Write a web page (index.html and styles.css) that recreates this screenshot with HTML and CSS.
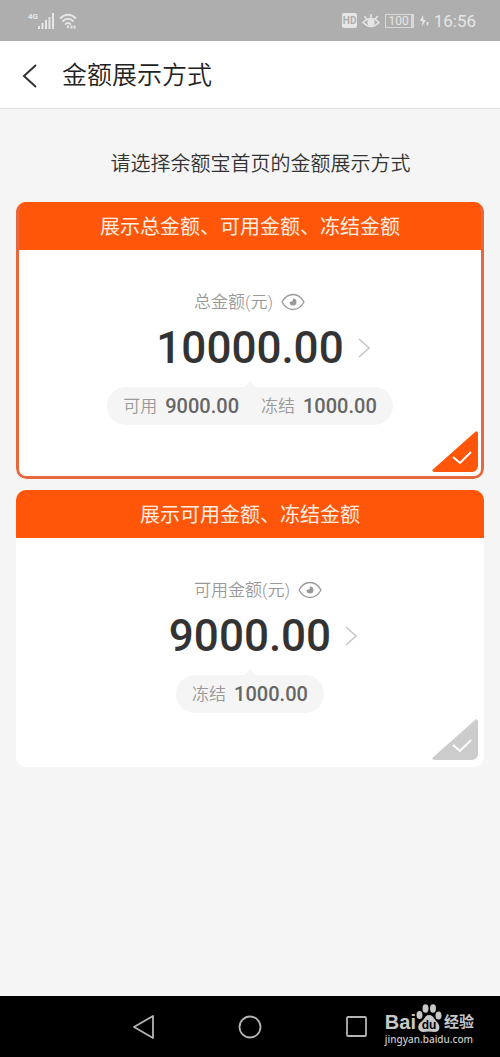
FILE: index.html
```html
<!DOCTYPE html>
<html lang="zh-CN">
<head>
<meta charset="utf-8">
<meta name="viewport" content="width=device-width, initial-scale=1">
<title>金额展示方式</title>
<link rel="stylesheet" href="styles.css">
</head>
<body>
<div class="status">
  <div class="status-group">
    <span class="network">4G</span>
    <svg class="signal" width="17" height="16" viewBox="0 0 17 16" fill="currentColor"><path d="M0 13h2v3H0zM3.500 10h2v6h-2zM7 7h2v9H7zM10.500 4h2v12h-2zM14 0h2v16h-2z"/></svg>
    <svg width="20" height="16" viewBox="0 0 20 16" fill="none" stroke="currentColor" stroke-width="1.800"><path d="M1 5.500Q9 -2 17 5.500M3.500 8.500Q9 3 14.500 8.500M6 11.500Q9 8.500 12 11.500"/><path d="M9 12.500v2.500M12.500 12.500v3M15.500 12.500v3" stroke-width="2"/></svg>
  </div>
  <div class="status-group status-right">
    <span class="hd">HD</span>
    <svg width="18" height="16" viewBox="0 0 18 16" fill="none" stroke="currentColor" stroke-width="1.600"><path d="M1 9.500Q9 1.500 17 9.500Q9 17.500 1 9.500zM9 4.500V1M4.500 6L2.500 3M13.500 6l2-3"/><circle cx="9" cy="9.500" r="2.800" fill="currentColor"/></svg>
    <span class="battery">100</span>
    <svg class="bolt" width="10" height="12" viewBox="0 0 10 12" fill="currentColor"><path d="M4 0L1 6h2.500L3 11l4-6H4.500zM7.500 7h2v2l-1.500 2z"/></svg>
    <span class="clock">16:56</span>
  </div>
</div>

<header class="header">
  <button class="back" type="button" aria-label="返回">
    <svg width="16" height="26" viewBox="0 0 16 26" fill="none" stroke="currentColor" stroke-width="2"><path d="M14 2L2 13l12 11"/></svg>
  </button>
  <h1 class="title">金额展示方式</h1>
</header>

<main class="main">
  <h2 class="prompt">请选择余额宝首页的金额展示方式</h2>

  <label class="card">
    <span class="card-head">展示总金额、可用金额、冻结金额</span>
    <span class="card-body">
      <span class="caption">总金额(元)
        <svg class="eye" width="24" height="18" viewBox="0 0 24 18" fill="none" stroke="currentColor" stroke-width="1.300"><path d="M1 9C6.500-1 17.500-1 23 9C17.500 19 6.500 19 1 9z"/><path d="M12 5.500a3.500 3.500 0 1 1-3.500 3.500q3.500 0 3.500-3.500z" fill="currentColor" stroke="none"/></svg>
      </span>
      <span class="amount-row">
        <span class="amount">10000.00</span>
        <svg class="arrow" width="12" height="20" viewBox="0 0 12 20" fill="none" stroke="currentColor" stroke-width="1.600"><path d="M1 1l10 9-10 9"/></svg>
      </span>
      <span class="pill">
        <span class="pair">可用 <b class="value">9000.00</b></span>
        <span class="pair">冻结 <b class="value">1000.00</b></span>
      </span>
    </span>
    <input class="choice" type="radio" name="display" checked>
    <svg class="tick" width="20" height="14" viewBox="0 0 20 14" fill="none" stroke="currentColor" stroke-width="2"><path d="M1 6l7 6L19 1"/></svg>
  </label>

  <label class="card">
    <span class="card-head">展示可用金额、冻结金额</span>
    <span class="card-body">
      <span class="caption">可用金额(元)
        <svg class="eye" width="24" height="18" viewBox="0 0 24 18" fill="none" stroke="currentColor" stroke-width="1.300"><path d="M1 9C6.500-1 17.500-1 23 9C17.500 19 6.500 19 1 9z"/><path d="M12 5.500a3.500 3.500 0 1 1-3.500 3.500q3.500 0 3.500-3.500z" fill="currentColor" stroke="none"/></svg>
      </span>
      <span class="amount-row">
        <span class="amount">9000.00</span>
        <svg class="arrow" width="12" height="20" viewBox="0 0 12 20" fill="none" stroke="currentColor" stroke-width="1.600"><path d="M1 1l10 9-10 9"/></svg>
      </span>
      <span class="pill">
        <span class="pair">冻结 <b class="value">1000.00</b></span>
      </span>
    </span>
    <input class="choice" type="radio" name="display">
    <svg class="tick" width="20" height="14" viewBox="0 0 20 14" fill="none" stroke="currentColor" stroke-width="2"><path d="M1 6l7 6L19 1"/></svg>
  </label>
</main>

<nav class="nav">
  <button class="nav-button" type="button" aria-label="返回上一页"><svg width="24" height="24" viewBox="0 0 24 24" fill="none" stroke="currentColor" stroke-width="1.800" stroke-linejoin="round"><path d="M21 1v22L2 12z"/></svg></button>
  <button class="nav-button" type="button" aria-label="主屏幕"><svg width="24" height="24" viewBox="0 0 24 24" fill="none" stroke="currentColor" stroke-width="1.800"><circle cx="12" cy="12" r="10.500"/></svg></button>
  <button class="nav-button" type="button" aria-label="最近任务"><svg width="24" height="24" viewBox="0 0 24 24" fill="none" stroke="currentColor" stroke-width="1.800"><rect x="3" y="2" width="19" height="19" rx="1"/></svg></button>
  <div class="brand">
    <div class="brand-name">
      <span>Bai</span>
      <span class="paw">
        <svg width="26" height="28" viewBox="0 0 26 28" fill="currentColor"><ellipse cx="3.500" cy="11" rx="3" ry="4"/><ellipse cx="9.500" cy="4.500" rx="3" ry="4.200"/><ellipse cx="17" cy="4.500" rx="3" ry="4.200"/><ellipse cx="22.500" cy="11.500" rx="3" ry="4"/><path d="M13 11c4 0 5 4 8 7s4 9-2 10q-6-1-12 0c-6-1-6-7-2-10s4-7 8-7z"/></svg>
        <span class="paw-text">du</span>
      </span>
      <span class="brand-cn">经验</span>
    </div>
    <div class="brand-url">jingyan.baidu.com</div>
  </div>
</nav>
</body>
</html>
```
FILE: styles.css
```css
* {
  box-sizing: border-box;
}

body {
  margin: 0;
  min-height: 100vh;
  display: flex;
  flex-direction: column;
  background: #f5f5f5;
  color: #333;
  font-family: Roboto, "Noto Sans CJK SC", sans-serif;
}

button {
  padding: 0;
  border: 0;
  background: none;
  color: inherit;
}

svg {
  display: block;
  flex: none;
}

.status {
  height: 41px;
  padding: 0 24px 0 28px;
  display: flex;
  align-items: center;
  justify-content: space-between;
  background: #aeaeae;
  color: #e6e6e6;
}

.status-group {
  display: flex;
  align-items: center;
}

.network {
  align-self: flex-start;
  font-size: 8px;
  font-weight: 700;
  line-height: 8px;
}

.signal {
  margin-right: 4px;
}

.status-right {
  gap: 5px;
}

.hd {
  padding: 0 1px;
  border-radius: 2px;
  background: #e6e6e6;
  color: #aeaeae;
  font-size: 10px;
  font-weight: 700;
  line-height: 15px;
}

.battery {
  padding: 0 2px;
  border: 1px solid #d8d8d8;
  border-right-width: 3px;
  font-size: 12px;
  line-height: 12px;
}

.clock {
  font-size: 17px;
  line-height: 20px;
}

.header {
  height: 68px;
  padding: 2px 22px 0;
  display: flex;
  align-items: center;
  gap: 24px;
  border-bottom: 1px solid #dedede;
  background: #fff;
}

.title {
  margin: 0;
  font-size: 25px;
  font-weight: 350;
  line-height: 36px;
  color: #222;
}

.main {
  flex: 1;
  padding: 40px 16px 24px;
  display: flex;
  flex-direction: column;
}

.prompt {
  margin: 0 0 23px;
  padding-left: 21px;
  font-size: 20px;
  font-weight: 350;
  line-height: 30px;
  text-align: center;
}

.card {
  position: relative;
  display: block;
  margin-bottom: 11px;
  padding-bottom: 54px;
  border-radius: 10px;
  background: #fff;
  overflow: hidden;
}

.card:has(:checked)::after {
  content: "";
  position: absolute;
  inset: 0;
  border: 3px solid #e8683e;
  border-top-color: #ff560a;
  border-radius: 10px;
  pointer-events: none;
}

.card-head {
  display: block;
  padding-top: 2px;
  background: #ff560a;
  color: #ffeee0;
  font-size: 20px;
  line-height: 46px;
  text-align: center;
}

.card-body {
  padding-top: 39px;
  display: flex;
  flex-direction: column;
  align-items: center;
}

.caption {
  width: 112px;
  display: flex;
  align-items: center;
  gap: 8px;
  color: #999;
  font-size: 17px;
  font-weight: 350;
  line-height: 26px;
  white-space: nowrap;
}

.amount-row {
  width: 100%;
  margin-bottom: 6px;
  display: grid;
  grid-template-columns: 1fr auto 1fr;
  align-items: center;
  column-gap: 14px;
}

.amount {
  grid-column: 2;
  font-size: 44px;
  font-weight: 500;
  line-height: 66px;
}

.arrow {
  color: #c8c8c8;
}

.pill {
  position: relative;
  padding: 0 16px;
  display: flex;
  gap: 22px;
  border-radius: 19px;
  background: #f5f5f5;
  color: #999;
  font-size: 17px;
  font-weight: 350;
  line-height: 38px;
}

.pill::before {
  content: "";
  position: absolute;
  left: 50%;
  bottom: 100%;
  margin-left: -6px;
  border: 6px solid transparent;
  border-top: 0;
  border-bottom-color: #f5f5f5;
}

.pair {
  display: flex;
  align-items: center;
  gap: 8px;
}

.value {
  color: #666;
  font-size: 20px;
  font-weight: 500;
}

.choice {
  appearance: none;
  position: absolute;
  right: 6px;
  bottom: 7px;
  width: 46px;
  height: 41px;
  margin: 0;
  border-radius: 3px 3px 6px 3px;
  background: #ccc;
  clip-path: polygon(0 96%, 96% 0, 100% 0, 100% 100%, 0 100%);
}

.choice:checked {
  background: #ff560a;
}

.tick {
  position: absolute;
  right: 12px;
  bottom: 14px;
  color: #fff;
}

.nav {
  position: relative;
  height: 61px;
  display: flex;
  align-items: center;
  justify-content: center;
  gap: 82px;
  background: #000;
  color: #b4b4b4;
}

.brand {
  position: absolute;
  right: 26px;
  bottom: 10px;
  color: #c8c8c8;
}

.brand-name {
  display: flex;
  align-items: flex-end;
  font-family: "Liberation Sans", "Noto Sans CJK SC", sans-serif;
  font-size: 20px;
  font-weight: 700;
  line-height: 20px;
}

.paw {
  position: relative;
}

.paw-text {
  position: absolute;
  inset: auto 0 0;
  color: #000;
  font-size: 12px;
  line-height: 14px;
  text-align: center;
}

.brand-cn {
  margin-left: 2px;
  font-size: 15px;
}

.brand-url {
  font-family: "Noto Sans", sans-serif;
  font-size: 10px;
  font-weight: 500;
  line-height: 15px;
}
```
